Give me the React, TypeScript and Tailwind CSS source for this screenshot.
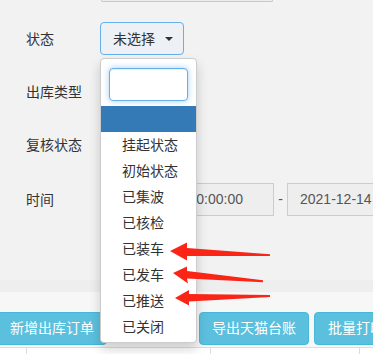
import React from "react";

const FONT = '"Liberation Sans", "Noto Sans CJK SC", Arial, sans-serif';

function Label({ children }: { children: React.ReactNode }) {
  return (
    <div className="w-[100px] shrink-0 pl-[26px] text-[14px] leading-[20px] text-[#333] whitespace-nowrap">{children}</div>
  );
}

export default function App() {
  const items = ["挂起状态", "初始状态", "已集波", "已核检", "已装车", "已发车", "已推送", "已关闭"];
  return (
    <div
      className="relative w-[373px] h-[354px] overflow-hidden bg-[#f2f2f2] text-[#333]"
      style={{ fontFamily: FONT }}
    >
      {/* stub of the input above */}
      <div className="ml-[101px] w-[172px] h-[2px] border-b border-x border-[#c8c8c8] rounded-b-[3px] bg-[#eee]" />

      <div className="flex flex-col pt-[20px]">
        {/* 状态 */}
        <div className="flex items-center h-[33px]">
          <Label>状态</Label>
          <div className="flex shrink-0 items-center w-[84px] h-[33px] rounded-[4px] border border-[#66afe9] bg-[#edf0f4] pl-[12px] text-[14px]">
            <span className="leading-[20px] whitespace-nowrap">未选择</span>
            <span className="ml-[10px] w-0 h-0 border-l-[4px] border-r-[4px] border-t-[4px] border-l-transparent border-r-transparent border-t-[#333]" />
          </div>
        </div>
        {/* 出库类型 */}
        <div className="flex items-center h-[33px] mt-[20px]">
          <Label>出库类型</Label>
        </div>
        {/* 复核状态 */}
        <div className="flex items-center h-[33px] mt-[20px]">
          <Label>复核状态</Label>
        </div>
        {/* 时间 */}
        <div className="flex items-center h-[33px] mt-[22px]">
          <Label>时间</Label>
          <div className="flex shrink-0 items-center w-[174px] h-[33px] border border-[#ccc] bg-[#eee] pl-[12px] text-[14px] text-[#555] whitespace-nowrap overflow-hidden">
            2021-12-14 00:00:00
          </div>
          <div className="w-[13px] shrink-0 text-center text-[14px] text-[#555]">-</div>
          <div className="flex items-center w-[174px] shrink-0 h-[33px] border border-[#ccc] bg-[#eee] pl-[12px] text-[14px] text-[#555] whitespace-nowrap overflow-hidden">
            2021-12-14 23:59:59
          </div>
        </div>

        {/* band */}
        <div className="mt-[64px] h-[12px] bg-[#eeeeee]" />
        <div className="bg-[#f7f7f7] pt-[20px] pb-[2px] flex items-center gap-[5px] ml-[-3px] whitespace-nowrap">
          <div className="shrink-0 h-[33px] flex items-center px-[12px] rounded-[4px] bg-[#5bc0de] border border-[#46b8da] text-white text-[14px]">
            新增出库订单
          </div>
          <div className="shrink-0 w-[82px] h-[33px]" />
          <div className="shrink-0 h-[33px] flex items-center px-[12px] rounded-[4px] bg-[#5bc0de] border border-[#46b8da] text-white text-[14px]">
            导出天猫台账
          </div>
          <div className="shrink-0 h-[33px] flex items-center px-[13px] rounded-[4px] bg-[#5bc0de] border border-[#46b8da] text-white text-[14px]">
            批量打印发货单
          </div>
        </div>
        <div className="flex h-[12px] bg-white border-t border-[#ddd]">
          <div className="shrink-0 w-[27px] border-r border-[#ddd]" />
          <div className="shrink-0 w-[184px] border-r border-[#ddd]" />
          <div className="shrink-0 w-[149px] border-r border-[#ddd]" />
        </div>
      </div>

      {/* dropdown */}
      <div className="absolute left-[100px] top-[58px] w-[97px] h-[285px] bg-white border border-[#ccc] rounded-[4px] shadow-[0_6px_12px_rgba(0,0,0,0.175)]">
        <div className="px-[8px] pt-[9px]">
          <div className="h-[33px] rounded-[4px] border border-[#66afe9] bg-white shadow-[inset_0_1px_1px_rgba(0,0,0,0.075),0_0_6px_rgba(102,175,233,0.6)]" />
        </div>
        <div className="mt-[5px] h-[26px] bg-[#337ab7]" />
        {items.map((t) => (
          <div key={t} className="h-[26px] flex items-center pl-[21px] text-[14px] text-[#333] whitespace-nowrap">
            {t}
          </div>
        ))}
      </div>

      {/* red arrows */}
      <svg className="absolute left-0 top-0 pointer-events-none" width="373" height="354" viewBox="0 0 373 354">
        <g fill="#fa2417">
          <polygon points="170,251 187,242.5 187,248 270,254.2 270,256 187,256 187,260.5" />
          <polygon points="173,273 187,266.5 187,271 263,280.3 263,282.3 187,278.5 188,283.5" />
          <polygon points="175,298 189,290 189,294 270,295 270,297 189,301.5 189,305.5" />
        </g>
      </svg>
    </div>
  );
}
